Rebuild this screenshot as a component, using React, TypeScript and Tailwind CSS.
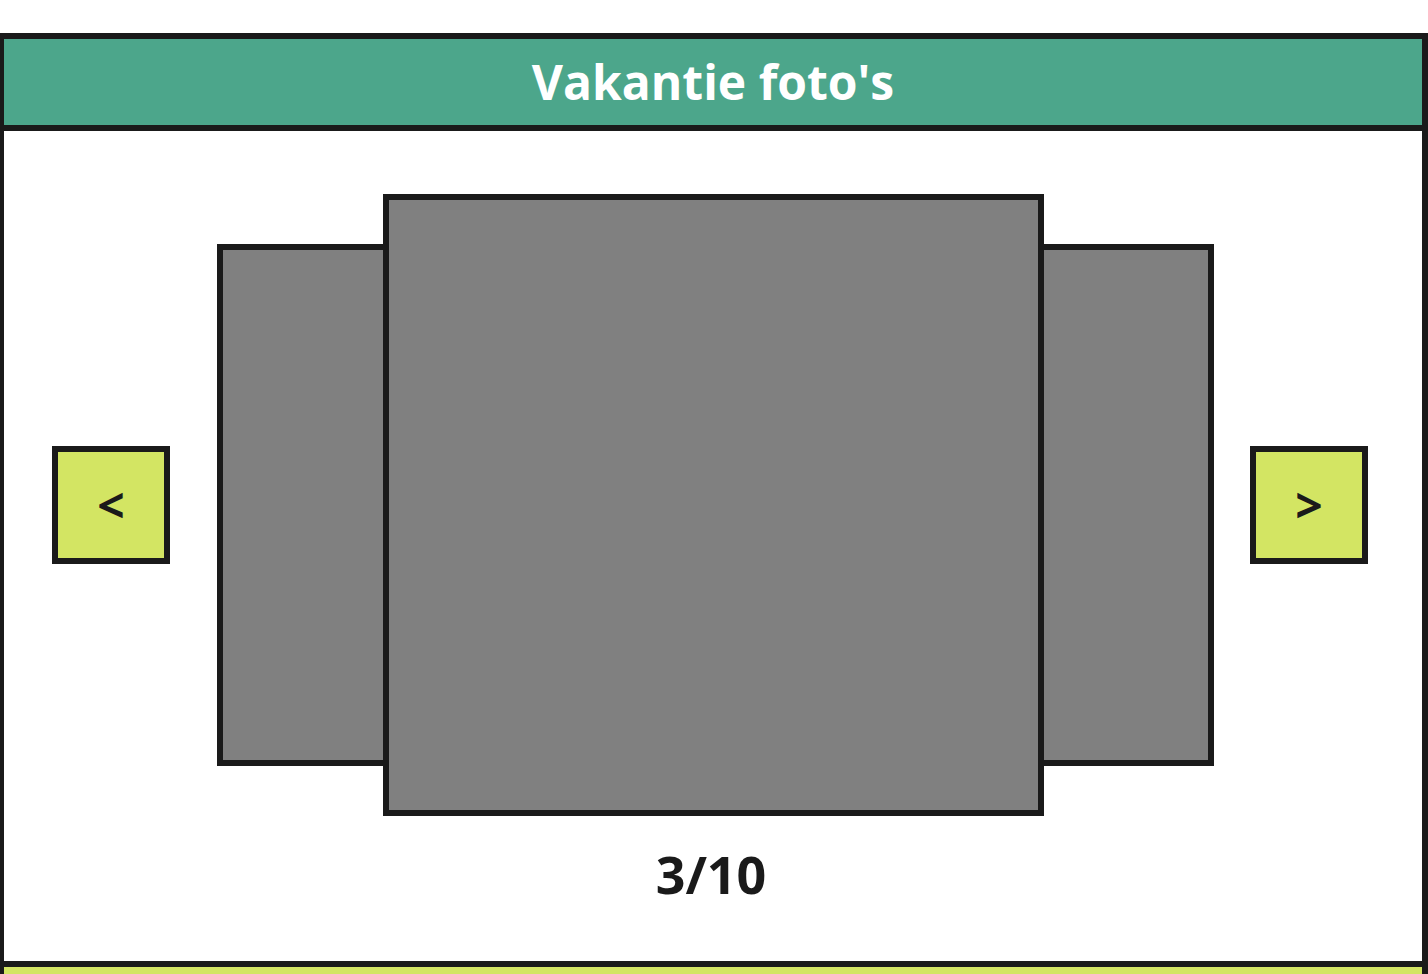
const Arrow = ({ label }: { label: string }) => {
  return (
    <button className="w-[118px] h-[118px] shrink-0 border-[6px] border-[#1a1a1a] bg-[#d3e563] flex items-center justify-center text-[48px] leading-none font-bold text-[#1a1a1a]">
      {label}
    </button>
  );
};

const App = () => {
  return (
    <div className="w-[1428px] h-[974px] overflow-hidden bg-white pt-[33px] font-['Open_Sans',sans-serif]">
      <div className="border-l-4 border-r-[6px] border-t-[6px] border-[#1a1a1a] flex flex-col">
        {/* header */}
        <div className="h-[92px] bg-[#4ca68b] border-b-[6px] border-[#1a1a1a] flex items-center justify-center">
          <h1 className="text-[48px] leading-none font-bold text-white">Vakantie foto's</h1>
        </div>

        {/* gallery */}
        <div className="h-[830px] bg-white flex flex-col pt-[63px]">
          <div className="flex items-center pl-[48px]">
            <Arrow label="<" />
            <div className="ml-[47px] w-[173px] h-[522px] shrink-0 bg-[#808080] border-[6px] border-[#1a1a1a]" />
            <div className="-ml-[7px] w-[661px] h-[622px] shrink-0 bg-[#808080] border-[6px] border-[#1a1a1a] relative z-10" />
            <div className="-ml-[7px] w-[177px] h-[522px] shrink-0 bg-[#808080] border-[6px] border-[#1a1a1a]" />
            <div className="ml-[36px]">
              <Arrow label=">" />
            </div>
          </div>
          <p className="mt-[32px] text-center text-[52px] leading-none font-bold text-[#1a1a1a] pr-[4px]">3/10</p>
        </div>

        {/* footer */}
        <div className="h-[40px] bg-[#d3e563] border-t-[6px] border-[#1a1a1a]" />
      </div>
    </div>
  );
};

export default App;
